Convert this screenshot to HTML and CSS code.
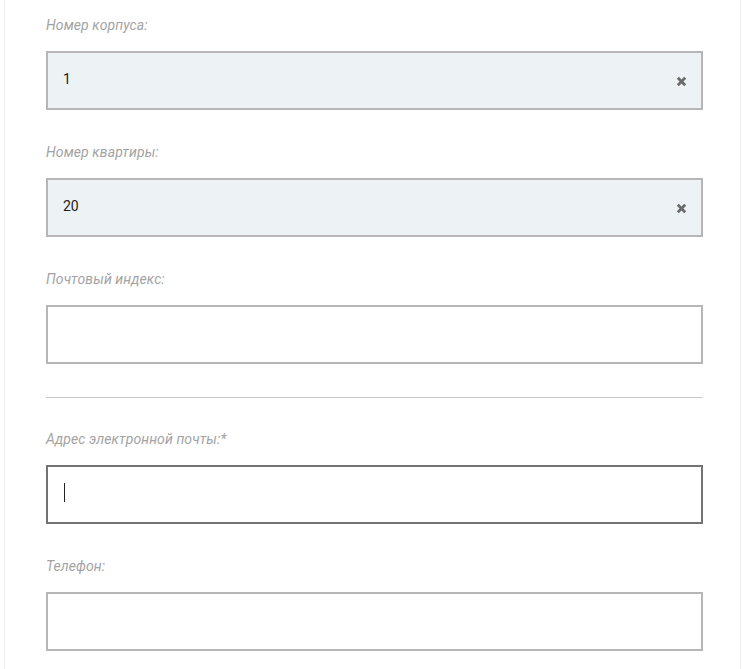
FILE: index.html
```html
<!DOCTYPE html>
<html lang="ru">
<head>
<meta charset="utf-8">
<title>Форма</title>
<link rel="stylesheet" href="styles.css">
</head>
<body>
<div class="panel">
  <div class="group">
    <div class="field">
      <div class="label">Номер корпуса:</div>
      <div class="box filled">
        <span class="value">1</span>
        <svg class="clear" width="11" height="11" viewBox="0 0 11 11"><path d="M1.8 1.8 L9.2 9.2 M9.2 1.8 L1.8 9.2" stroke="#6a6a6a" stroke-width="2.8" stroke-linecap="butt"/></svg>
      </div>
    </div>
    <div class="field">
      <div class="label">Номер квартиры:</div>
      <div class="box filled">
        <span class="value">20</span>
        <svg class="clear" width="11" height="11" viewBox="0 0 11 11"><path d="M1.8 1.8 L9.2 9.2 M9.2 1.8 L1.8 9.2" stroke="#6a6a6a" stroke-width="2.8" stroke-linecap="butt"/></svg>
      </div>
    </div>
    <div class="field">
      <div class="label">Почтовый индекс:</div>
      <div class="box"></div>
    </div>
  </div>
  <div class="divider"></div>
  <div class="group">
    <div class="field">
      <div class="label">Адрес электронной почты:*</div>
      <div class="box focused"><span class="caret"></span></div>
    </div>
    <div class="field">
      <div class="label">Телефон:</div>
      <div class="box"></div>
    </div>
  </div>
</div>
</body>
</html>
```
FILE: styles.css
```css
html, body {
  margin: 0;
  padding: 0;
  background: #ffffff;
}
body {
  font-family: Roboto, "Liberation Sans", sans-serif;
}
.panel {
  margin-left: 4px;
  width: 737px;
  border-left: 1px solid #eeeeee;
  border-right: 1px solid #eeeeee;
  padding: 17px 38px 40px 41px;
  box-sizing: border-box;
  min-height: 669px;
}
.group {
  display: flex;
  flex-direction: column;
  gap: 34px;
}
.field {
  display: flex;
  flex-direction: column;
  gap: 18px;
}
.label {
  font-style: italic;
  font-size: 14px;
  line-height: 16px;
  letter-spacing: 0.1px;
  color: #a3a3a3;
  height: 16px;
}
.box {
  width: 657px;
  height: 59px;
  box-sizing: border-box;
  border: 2px solid #b6b6b6;
  background: #ffffff;
  display: flex;
  align-items: center;
  padding: 0 16px;
}
.box.filled {
  background: #edf2f5;
  justify-content: space-between;
}
.box.focused {
  border-color: #737373;
}
.value {
  font-size: 14px;
  color: #222222;
  margin-top: -3px;
  margin-left: -1px;
}
.clear {
  margin-right: -2px;
  margin-top: 2px;
}
.caret {
  width: 1px;
  height: 19px;
  background: #222222;
  margin-top: -4px;
}
.divider {
  height: 1px;
  background: #c9c9c9;
  margin: 33px 0;
  width: 657px;
}
```
